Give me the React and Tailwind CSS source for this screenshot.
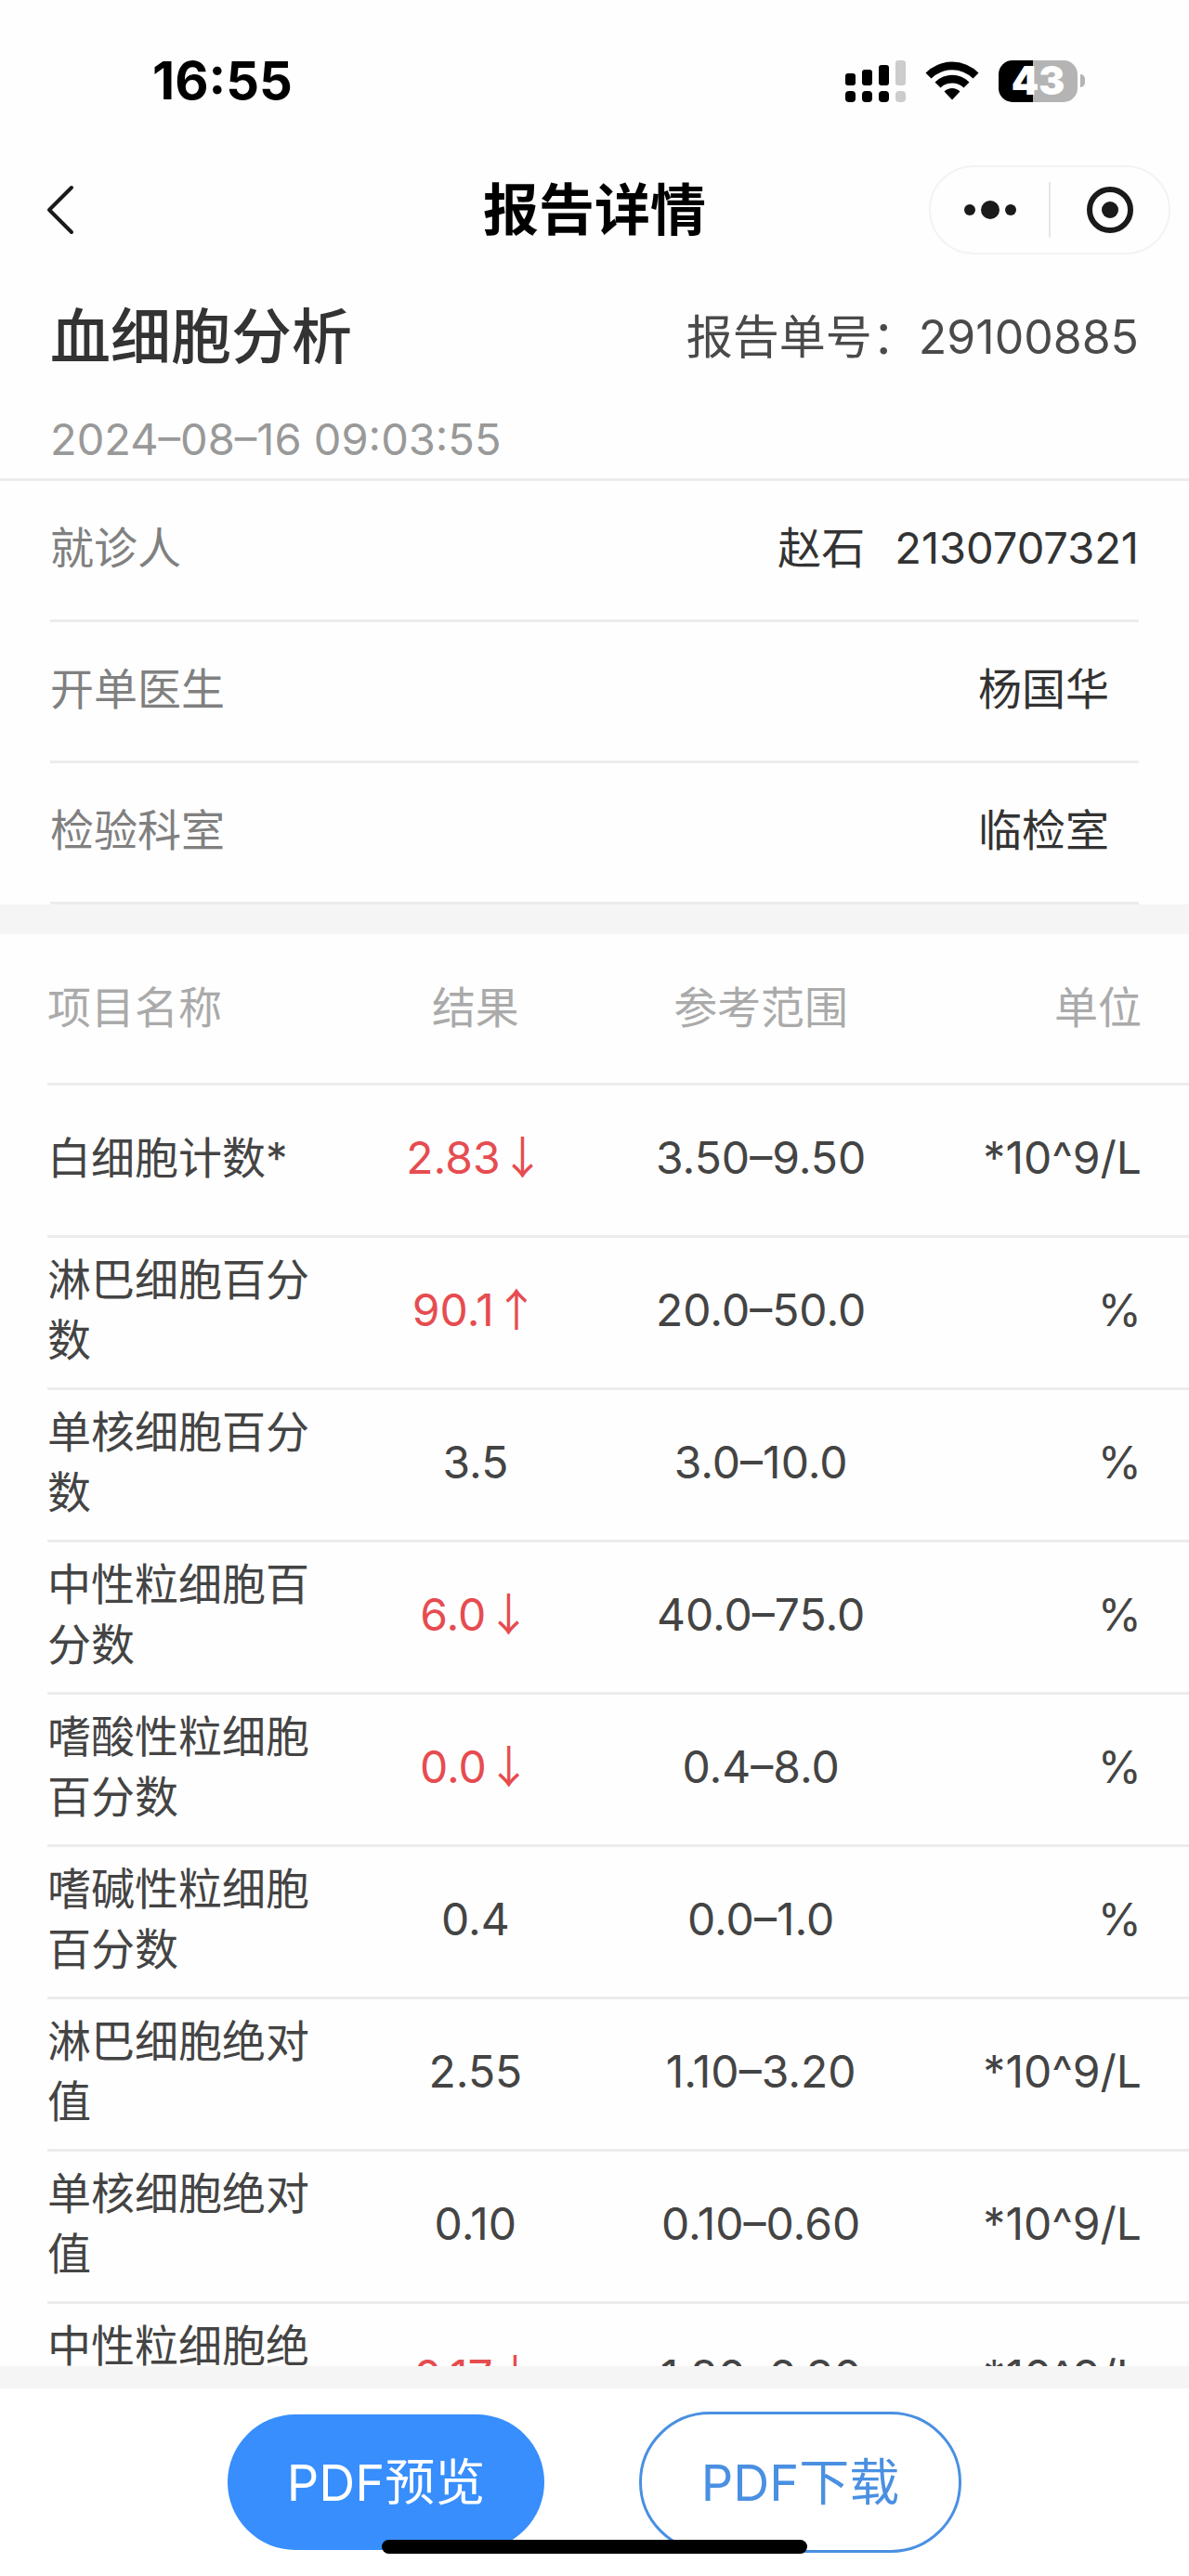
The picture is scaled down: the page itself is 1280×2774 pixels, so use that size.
import React from 'react';

const info = [
  { label: '开单医生', value: '杨国华' },
  { label: '检验科室', value: '临检室' },
];

const columns = ['项目名称', '结果', '参考范围', '单位'];

const rows = [
  { name: '白细胞计数*', result: '2.83', flag: '↓', range: '3.50–9.50', unit: '*10^9/L' },
  { name: '淋巴细胞百分数', result: '90.1', flag: '↑', range: '20.0–50.0', unit: '%' },
  { name: '单核细胞百分数', result: '3.5', range: '3.0–10.0', unit: '%' },
  { name: '中性粒细胞百分数', result: '6.0', flag: '↓', range: '40.0–75.0', unit: '%' },
  { name: '嗜酸性粒细胞百分数', result: '0.0', flag: '↓', range: '0.4–8.0', unit: '%' },
  { name: '嗜碱性粒细胞百分数', result: '0.4', range: '0.0–1.0', unit: '%' },
  { name: '淋巴细胞绝对值', result: '2.55', range: '1.10–3.20', unit: '*10^9/L' },
  { name: '单核细胞绝对值', result: '0.10', range: '0.10–0.60', unit: '*10^9/L' },
  { name: '中性粒细胞绝对值', result: '0.17', flag: '↓', range: '1.80–6.30', unit: '*10^9/L' },
];

const SignalIcon = () => (
  <svg width="65" height="46" viewBox="0 0 65 46" aria-hidden="true">
    <rect x="0" y="15" width="11" height="13" rx="3" />
    <rect x="18" y="11" width="11" height="17" rx="3" />
    <rect x="36" y="6" width="11" height="22" rx="3" />
    <rect x="54" y="1" width="11" height="27" rx="3" fill="#cccccc" />
    <rect x="0" y="34" width="11" height="12" rx="4" />
    <rect x="18" y="34" width="11" height="12" rx="4" />
    <rect x="36" y="34" width="11" height="12" rx="4" />
    <rect x="54" y="34" width="11" height="12" rx="4" fill="#cccccc" />
  </svg>
);

const WifiIcon = () => (
  <svg width="58" height="44" viewBox="0 0 58 44" aria-hidden="true">
    <path d="M0.5 13.5 A40 40 0 0 1 57.5 13.5 L51.5 19.5 A32 32 0 0 0 6.5 19.5 Z" />
    <path d="M10.5 23.5 A26 26 0 0 1 47.5 23.5 L41.5 29.5 A18 18 0 0 0 16.5 29.5 Z" />
    <path d="M20.5 33.5 A12 12 0 0 1 37.5 33.5 L29 42.5 Z" />
  </svg>
);

const StatusBar = () => (
  <div className="flex h-[174px] shrink-0 items-center justify-between pl-[164px] pr-[112px] text-black">
    <span className="text-[56px] font-bold leading-[64px]">16:55</span>
    <div className="flex items-center gap-[21px]">
      <SignalIcon />
      <WifiIcon />
      <div className="flex items-center gap-[3px]">
        <span className="flex h-[45px] w-[85px] items-center justify-center rounded-[15px] bg-linear-to-r from-black from-43% to-[#b4b4b4] to-43% text-[42px] font-black leading-none text-white">
          43
        </span>
        <span className="h-[14px] w-[5px] rounded-r-full bg-[#b4b4b4]" />
      </div>
    </div>
  </div>
);

const NavBar = () => (
  <header className="relative flex h-[104px] shrink-0 items-center justify-center">
    <button aria-label="返回" className="absolute left-[50px]">
      <svg width="30" height="54" viewBox="0 0 30 54" fill="none" stroke="#1a1a1a" strokeWidth="4" strokeLinecap="round" strokeLinejoin="round">
        <path d="M27 3 L3 27 L27 51" />
      </svg>
    </button>
    <h1 className="text-[60px] font-bold leading-[80px] text-black">报告详情</h1>
    <div className="absolute right-[20px] flex h-[96px] w-[260px] items-center rounded-full border-2 border-[#f3f3f3]">
      <button aria-label="更多" className="flex h-full flex-1 items-center justify-center">
        <svg width="58" height="20" viewBox="0 0 58 20" fill="#1a1a1a">
          <circle cx="7" cy="10" r="6" />
          <circle cx="29" cy="10" r="10" />
          <circle cx="51" cy="10" r="6" />
        </svg>
      </button>
      <span className="h-[60px] w-[2px] bg-[#e6e6e6]" />
      <button aria-label="关闭" className="flex h-full flex-1 items-center justify-center">
        <svg width="52" height="52" viewBox="0 0 52 52">
          <circle cx="26" cy="26" r="22" fill="none" stroke="#1a1a1a" strokeWidth="6" />
          <circle cx="26" cy="26" r="9" fill="#1a1a1a" />
        </svg>
      </button>
    </div>
  </header>
);

const ReportHead = () => (
  <section className="shrink-0 border-b-[3px] border-[#ececec] px-[54px] pb-[10px] pt-[37px]">
    <div className="flex h-[96px] items-center justify-between">
      <h2 className="text-[65px] font-medium leading-[96px] text-[#333333]">血细胞分析</h2>
      <p className="text-[50px] leading-[96px] text-[#4a4a4a]">报告单号：29100885</p>
    </div>
    <p className="mt-[30px] text-[47px] leading-[64px] text-[#999999]">2024–08–16 09:03:55</p>
  </section>
);

const InfoRow = ({ label, children }) => (
  <div className="flex h-[152px] items-center justify-between border-b-[3px] border-[#ececec] pb-[4px] text-[47px]">
    <dt className="text-[#808080]">{label}</dt>
    <dd className="flex text-[#333333]">{children}</dd>
  </div>
);

const ResultTable = () => (
  <div className="min-h-0 flex-1 overflow-hidden pl-[51px]">
    <table className="w-full table-fixed border-collapse text-[48px] leading-[65px] text-[#444444]">
      <thead>
        <tr className="h-[161px] border-b-[3px] border-[#ececec] text-[47px] text-[#aaaaaa]">
          {columns.map((c, i) => (
            <th
              key={c}
              className={`p-0 pb-[3px] font-normal ${i === 0 ? 'text-left' : i === 3 ? 'pr-[51px] text-right' : 'text-center'}`}
            >
              {c}
            </th>
          ))}
        </tr>
      </thead>
      <tbody>
        {rows.map((r) => (
          <tr key={r.name} className="h-[164px] border-b-[3px] border-[#ececec]">
            <td className="p-0 pb-[6px] text-[47px]">{r.name}</td>
            <td className={`p-0 pb-[6px] text-center ${r.flag ? 'text-[#e64c50]' : ''}`}>
              {r.result}
              {r.flag && <span className="font-['Noto_Sans_CJK_SC',sans-serif] leading-none">{r.flag}</span>}
            </td>
            <td className="p-0 pb-[6px] text-center">{r.range}</td>
            <td className="p-0 pb-[6px] pr-[51px] text-right">{r.unit}</td>
          </tr>
        ))}
      </tbody>
    </table>
  </div>
);

const Footer = () => (
  <footer className="relative flex h-[226px] shrink-0 items-center justify-center gap-[102px] border-t-[24px] border-[#f5f5f5] bg-white">
    <button className="h-[146px] w-[341px] rounded-full bg-[#378efc] text-[54px] text-white">PDF预览</button>
    <button className="h-[152px] w-[347px] rounded-full border-[3px] border-[#4a90e2] text-[54px] text-[#4a90e2]">
      PDF下载
    </button>
    {/* home indicator */}
    <div className="absolute bottom-[24px] left-1/2 h-[15px] w-[458px] -translate-x-1/2 rounded-full bg-black" />
  </footer>
);

const App = () => (
  <div className="flex h-screen flex-col bg-[#fefefe] font-['Inter','Noto_Sans_CJK_SC',sans-serif]">
    <StatusBar />
    <NavBar />
    <ReportHead />
    <dl className="shrink-0 px-[54px]">
      <InfoRow label="就诊人">
        <span className="mr-[32px]">赵石</span>
        <span>2130707321</span>
      </InfoRow>
      {info.map((item) => (
        <InfoRow key={item.label} label={item.label}>
          <span className="mr-[32px]">{item.value}</span>
        </InfoRow>
      ))}
    </dl>
    <div className="h-[32px] shrink-0 bg-[#f5f5f5]" />
    <ResultTable />
    <Footer />
  </div>
);

export default App;
